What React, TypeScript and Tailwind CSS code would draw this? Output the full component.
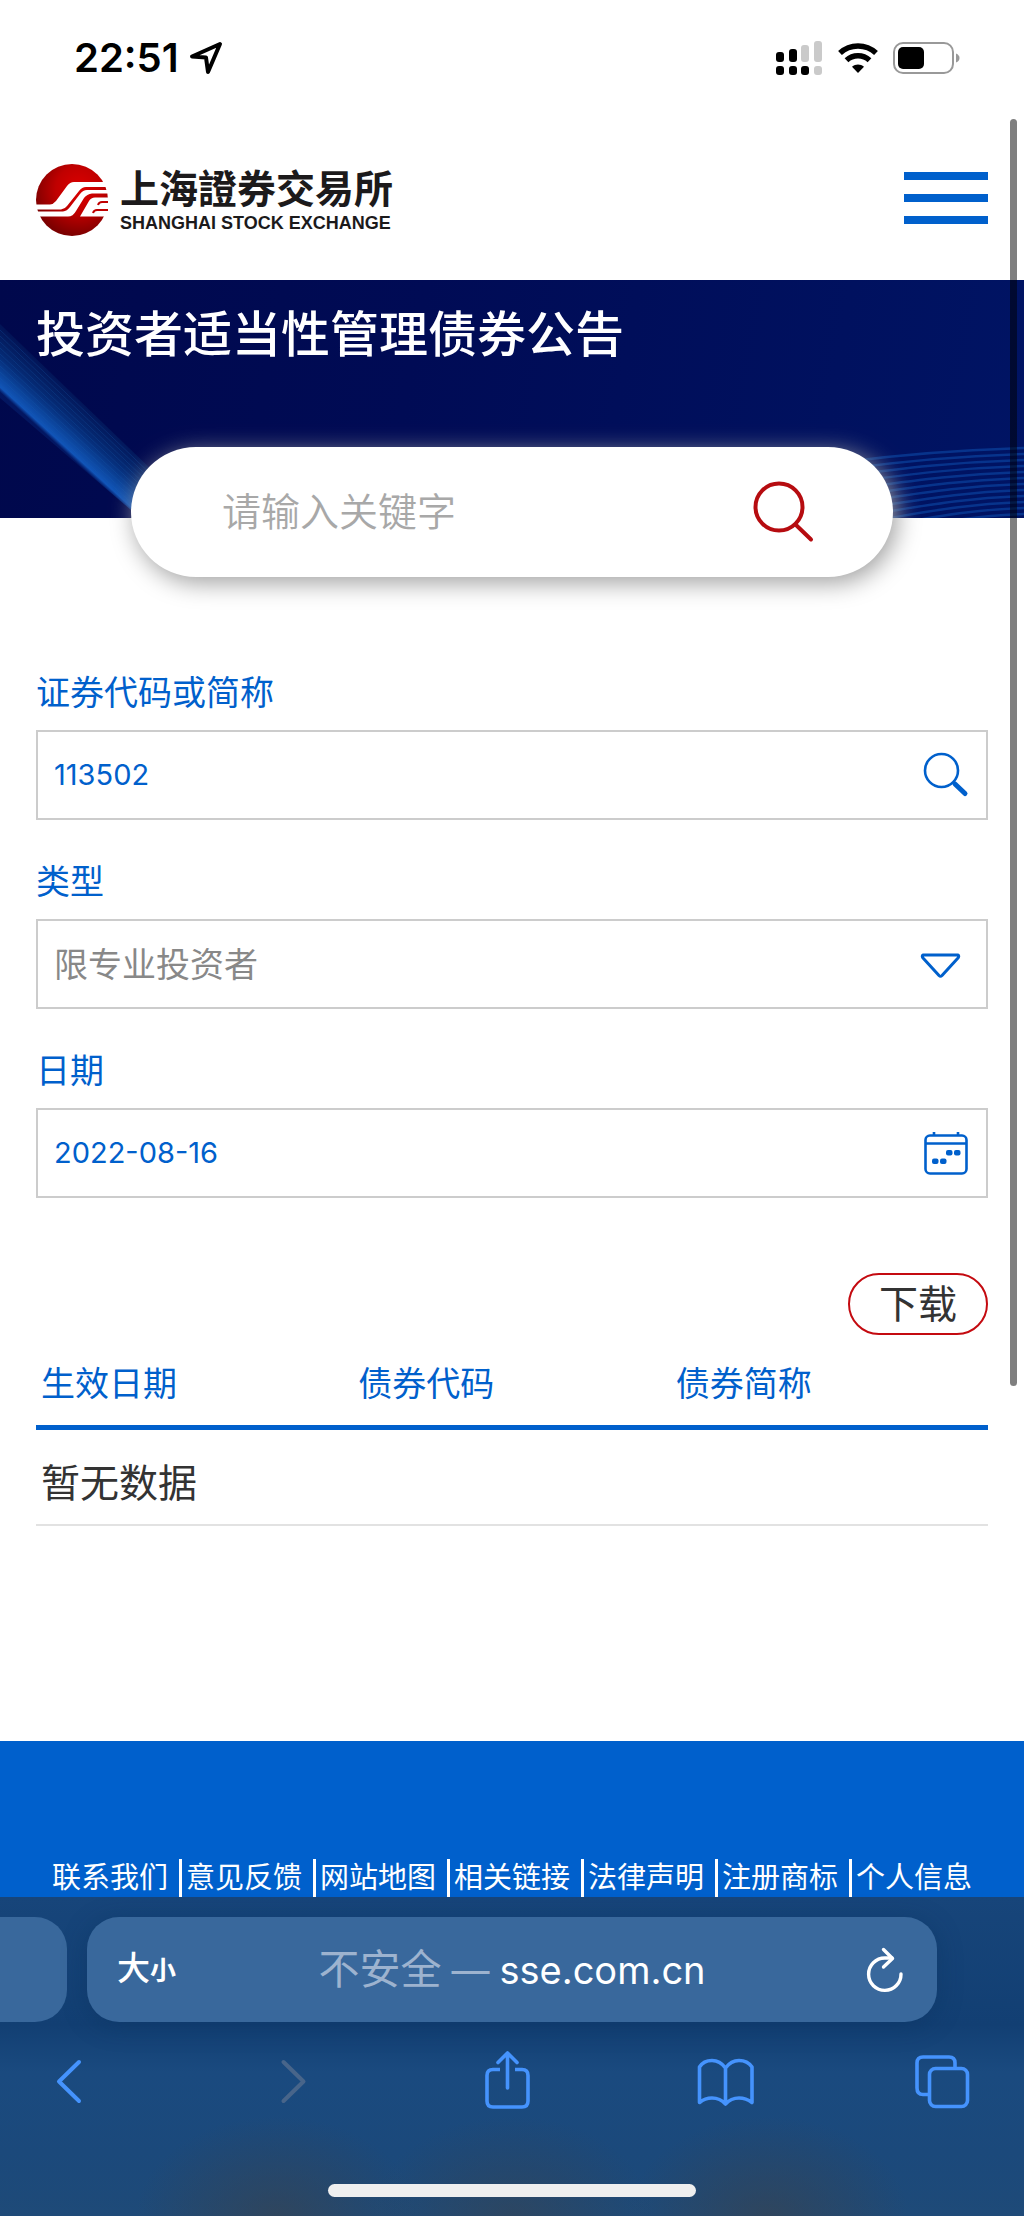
import { useState } from 'react';
import type { ReactNode } from 'react';

const footerLinks = ['联系我们', '意见反馈', '网站地图', '相关链接', '法律声明', '注册商标', '个人信息'];
const columns = ['生效日期', '债券代码', '债券简称'];

function StatusBar() {
  return (
    <div className="flex h-[116px] items-center justify-between pr-[63px] pl-[74px]">
      <div className="flex items-center gap-[10px]">
        <span className="text-[40px] leading-[48px] font-semibold text-black">22:51</span>
        <svg className="h-[34px] w-[34px]" viewBox="0 0 34 34" fill="none" stroke="#000" strokeWidth="4" strokeLinejoin="round">
          <path d="M31 3 L3 15.500 L17 16.500 L19 31 Z" />
        </svg>
      </div>
      <div className="flex items-center gap-[14px]">
        {/* 双卡信号 */}
        <svg className="h-[34px] w-[48px]" viewBox="0 0 48 34">
          <rect x="1" y="11" width="8" height="10" rx="3" />
          <rect x="14" y="8" width="8" height="13" rx="3" />
          <rect x="26" y="4" width="8" height="17" rx="3" fill="#cacaca" />
          <rect x="39" y="0" width="8" height="21" rx="3" fill="#cacaca" />
          <rect x="1" y="25" width="8" height="9" rx="3" />
          <rect x="14" y="25" width="8" height="9" rx="3" />
          <rect x="26" y="25" width="8" height="9" rx="3" />
          <rect x="39" y="25" width="8" height="9" rx="3" fill="#cacaca" />
        </svg>
        <svg className="h-[32px] w-[42px]" viewBox="0 0 42 32" fill="none" stroke="#000" strokeWidth="5.500">
          <path d="M3 11 C13 1.500 29 1.500 39 11" />
          <path d="M9.500 18.200 C16 12.200 26 12.200 32.500 18.200" />
          <path d="M21 31 L15 24.700 C18.500 21.700 23.500 21.700 27 24.700 Z" fill="#000" stroke="none" />
        </svg>
        <svg className="h-[32px] w-[68px]" viewBox="0 0 68 32">
          <rect x="1" y="1" width="59" height="30" rx="9" fill="none" stroke="#999" strokeWidth="2" />
          <rect x="5" y="5" width="26" height="22" rx="5" />
          <path d="M63 11.500 Q66.500 13 66.500 16 Q66.500 19 63 20.500 Z" fill="#999" />
        </svg>
      </div>
    </div>
  );
}

function Logo() {
  return (
    <a href="#" className="flex items-center gap-3">
      <svg className="h-[72px] w-[72px]" viewBox="0 0 72 72">
        <defs>
          <radialGradient id="logoRed" cx="0.600" cy="0.350" r="0.650">
            <stop offset="0" stopColor="#dc0000" />
            <stop offset="0.500" stopColor="#c00000" />
            <stop offset="1" stopColor="#7c0000" />
          </radialGradient>
        </defs>
        <circle cx="36" cy="36" r="36" fill="url(#logoRed)" />
        <g fill="#fff">
          <path d="M0 40.500 H14 Q17 40.500 20 37 L31 22 Q34 18 38 18 H72 V23 H50 Q46 23 43 27 L31 42 Q29 45 25 45.500 H0 Z" />
          <path d="M0 47.500 H27 Q31 47 34 43 L44 30 Q47 26 51 26 H72 V29.500 H56 Q51 30 48 34 L40 47 Q37 52.500 32 52.500 H0 Z" />
          <path d="M44 52.500 L53 37 Q55 33.500 59 33.500 H73 V52.500 Z" />
        </g>
        <path d="M72 38 H66 Q63 38 62 41 M72 46 H61 Q58 46 57 49" fill="none" stroke="#c00000" strokeWidth="2" />
      </svg>
      <span className="flex flex-col text-[#1c1a1b]">
        <span className="font-['Inter','Noto_Sans_CJK_TC',sans-serif] text-[39px] leading-[46px] font-bold">上海證券交易所</span>
        <span className="font-['Liberation_Sans',sans-serif] text-[18px] leading-[22px] font-bold">SHANGHAI STOCK EXCHANGE</span>
      </span>
    </a>
  );
}

function HeroArt() {
  const rays = [0, 1, 2, 3, 4, 5, 6, 7, 8, 9];
  const waves = [0, 1, 2, 3, 4, 5, 6, 7, 8, 9, 10, 11];
  return (
    <>
      <svg className="absolute top-0 left-0 h-full w-[180px]" viewBox="0 0 180 238" preserveAspectRatio="none">
        <defs>
          <linearGradient id="beam" gradientUnits="userSpaceOnUse" x1="0" y1="46" x2="-33" y2="82">
            <stop offset="0" stopColor="#07306f" stopOpacity="0.300" />
            <stop offset="0.450" stopColor="#06307c" stopOpacity="0.900" />
            <stop offset="0.700" stopColor="#0b439a" />
            <stop offset="0.920" stopColor="#1155b8" />
            <stop offset="1" stopColor="#0f4fb0" stopOpacity="0.200" />
          </linearGradient>
        </defs>
        <path d="M0 44 L180 217 V272 L0 118 Z" fill="url(#beam)" />
        {rays.map(i => (
          <path key={i} d={`M0 ${50 + i * 6} L180 ${222 + i * 5}`} stroke="#1d5fae" strokeOpacity="0.250" strokeWidth="1" />
        ))}
      </svg>
      <svg className="absolute right-0 bottom-0 h-[80px] w-[180px]" viewBox="0 0 180 80" fill="none">
        {waves.map(i => (
          <path
            key={i}
            d={`M0 ${24 + i * 7} C60 ${16 + i * 7} 110 ${12 + i * 6} 180 ${10 + i * 6}`}
            stroke="#0a3f9a"
            strokeOpacity="0.750"
            strokeWidth="2.500"
          />
        ))}
      </svg>
    </>
  );
}

function Field({ id, label, children }: { id: string; label: string; children: ReactNode }) {
  return (
    <div className="flex flex-col">
      <label htmlFor={id} className="mb-3 text-[34px] leading-[50px] text-[#0060cc]">
        {label}
      </label>
      <div className="relative flex h-[90px] border-2 border-[#ccc]">{children}</div>
    </div>
  );
}

function BrowserBar() {
  return (
    <div className="flex flex-col bg-[radial-gradient(ellipse_140px_100px_at_27%_100%,rgba(58,66,76,0.6),transparent),radial-gradient(ellipse_140px_100px_at_50%_100%,rgba(58,66,76,0.5),transparent),radial-gradient(ellipse_140px_100px_at_75%_100%,rgba(58,66,76,0.6),transparent),linear-gradient(#17457a,#123f73_40%,#1a4a7f_55%,#1b497b_80%,#1e4a78)]">
      <div className="flex gap-5 pt-5">
        <div className="h-[105px] w-[67px] rounded-r-[32px] bg-[#39689c]" />
        <div className="mr-[87px] flex h-[105px] flex-1 items-center rounded-[32px] bg-[#39689c] px-[30px] text-white shadow-[0_4px_24px_rgba(10,45,90,0.35)]">
          <button type="button" className="flex w-[60px] items-baseline">
            <span className="text-[33px] leading-[48px] font-medium">大</span>
            <span className="text-[26px] leading-[48px] font-bold">小</span>
          </button>
          <div className="flex flex-1 items-baseline justify-center gap-[10px] text-[38px] leading-[52px]">
            <span className="text-[41px] text-[#9db3cf]">不安全</span>
            <span className="text-[#9db3cf]">—</span>
            <span>sse.com.cn</span>
          </div>
          <button type="button" aria-label="刷新" className="flex w-[60px] justify-end">
            <svg className="h-[46px] w-[46px]" viewBox="0 0 46 46" fill="none" stroke="#fff" strokeWidth="3.400" strokeLinecap="round" strokeLinejoin="round">
              <path d="M40 27 A16.200 16.200 0 1 1 23.800 11 H31" />
              <path d="M22.500 2.500 L31.500 11.500 L22.500 20" />
            </svg>
          </button>
        </div>
      </div>
      <div className="mt-7 flex justify-between pr-[52px] pl-[42px] text-[#4593fd]">
        <button type="button" aria-label="后退">
          <svg className="h-[60px] w-[60px]" viewBox="0 0 60 60" fill="none" stroke="currentColor" strokeWidth="4" strokeLinecap="round" strokeLinejoin="round">
            <path d="M37 12 L17 31.500 L37 51" />
          </svg>
        </button>
        <button type="button" aria-label="前进" disabled className="text-[#48658a]">
          <svg className="h-[60px] w-[60px]" viewBox="0 0 60 60" fill="none" stroke="currentColor" strokeWidth="4" strokeLinecap="round" strokeLinejoin="round">
            <path d="M23.500 12 L43.500 31.500 L23.500 51" />
          </svg>
        </button>
        <button type="button" aria-label="分享">
          <svg className="h-[60px] w-[60px]" viewBox="0 0 60 60" fill="none" stroke="currentColor" strokeWidth="3.600" strokeLinecap="round" strokeLinejoin="round">
            <path d="M23 19.500 H16 Q10 19.500 10 25.500 V51 Q10 57 16 57 H45 Q51 57 51 51 V25.500 Q51 19.500 45 19.500 H38" strokeLinecap="butt" />
            <path d="M30.500 38 V3.500 M21 12.500 L30.500 3 L40 12.500" />
          </svg>
        </button>
        <button type="button" aria-label="书签">
          <svg className="h-[60px] w-[60px]" viewBox="0 0 60 60" fill="none" stroke="currentColor" strokeWidth="3.600" strokeLinecap="round" strokeLinejoin="round">
            <path d="M30.500 18 Q25 10.500 17 10.500 Q8.500 10.500 4.500 17 V52.500 Q10 48 17 48 Q25 48 30.500 54 Q36 48 44 48 Q51 48 57 52.500 V17 Q52.500 10.500 44 10.500 Q36 10.500 30.500 18 Z M30.500 18 V54" />
          </svg>
        </button>
        <button type="button" aria-label="标签页">
          <svg className="h-[60px] w-[60px]" viewBox="0 0 60 60" fill="none" stroke="currentColor" strokeWidth="3.600">
            <rect x="17.500" y="18.500" width="38" height="38" rx="6" />
            <path d="M43 18 V13 Q43 7 37 7 H11 Q5 7 5 13 V38 Q5 44.500 11 44.500 H17" />
          </svg>
        </button>
      </div>
      <div className="mx-auto mt-[74px] mb-[19px] h-[13px] w-[368px] rounded-full bg-[#efefef]" />
    </div>
  );
}

export default function App() {
  const [keyword, setKeyword] = useState('');
  const [code, setCode] = useState('113502');
  const [type, setType] = useState('限专业投资者');
  const [date, setDate] = useState('2022-08-16');

  return (
    <div className="relative flex min-h-screen flex-col overflow-hidden bg-white font-['Inter','Noto_Sans_CJK_SC',sans-serif]">
      <StatusBar />

      <header className="flex h-[164px] items-start justify-between px-9 pt-12">
        <Logo />
        <button type="button" aria-label="菜单" className="flex w-[84px] flex-col gap-[14px] pt-2">
          <span className="h-2 bg-[#0060cc]" />
          <span className="h-2 bg-[#0060cc]" />
          <span className="h-2 bg-[#0060cc]" />
        </button>
      </header>

      <section className="relative h-[238px] overflow-hidden bg-[linear-gradient(100deg,#00084c,#000b55_40%,#001464)] px-9 pt-5">
        <HeroArt />
        <h1 className="relative text-[49px] leading-[70px] font-medium text-white">投资者适当性管理债券公告</h1>
      </section>

      {/* 全站搜索 */}
      <form
        className="relative mx-[131px] -mt-[71px] flex h-[130px] items-center rounded-full bg-white pr-[78px] pl-[91px] shadow-[4px_6px_24px_#a0a0a0]"
        onSubmit={e => e.preventDefault()}
      >
        <input
          aria-label="请输入关键字"
          placeholder="请输入关键字"
          value={keyword}
          onChange={e => setKeyword(e.target.value)}
          className="h-[60px] min-w-0 flex-1 text-[39px] leading-[60px] font-[350] outline-none placeholder:text-[#a8a8a8]"
        />
        <button type="submit" aria-label="搜索">
          <svg className="h-[62px] w-[62px]" viewBox="0 0 62 62" fill="none" stroke="#b60c10" strokeWidth="4" strokeLinecap="round">
            <circle cx="26" cy="26" r="23.500" />
            <path d="M42.500 43.500 L58 58.500" />
          </svg>
        </button>
      </form>

      <main className="flex flex-col px-9 pt-[91px]">
        <div className="flex flex-col gap-[37px]">
          <Field id="code" label="证券代码或简称">
            <input
              id="code"
              value={code}
              onChange={e => setCode(e.target.value)}
              className="min-w-0 flex-1 px-4 text-[29px] text-[#0060cc] outline-none"
            />
            <button type="button" aria-label="查询" className="mr-[17px]">
              <svg className="h-[46px] w-[46px]" viewBox="0 0 46 46" fill="none" stroke="#0060cc" strokeLinecap="round">
                <circle cx="18.500" cy="18.500" r="16.500" strokeWidth="2.600" />
                <path d="M32 32 L42 41.500" strokeWidth="5" />
              </svg>
            </button>
          </Field>
          <Field id="type" label="类型">
            <select
              id="type"
              value={type}
              onChange={e => setType(e.target.value)}
              className="min-w-0 flex-1 appearance-none px-4 text-[34px] text-[#888] outline-none"
            >
              <option>限专业投资者</option>
              <option>全部</option>
            </select>
            <svg className="pointer-events-none absolute top-[29px] right-[23px] h-[32px] w-[44px]" viewBox="0 0 44 32" fill="none" stroke="#0060cc" strokeWidth="3" strokeLinejoin="round">
              <path d="M4 5 H39 Q40.500 6 39 8 L23 25.500 Q21.500 27 20 25.500 L4 8 Q2.500 6 4 5 Z" />
            </svg>
          </Field>
          <Field id="date" label="日期">
            <input
              id="date"
              value={date}
              onChange={e => setDate(e.target.value)}
              className="min-w-0 flex-1 px-4 text-[29px] text-[#0060cc] outline-none"
            />
            <button type="button" aria-label="选择日期" className="mr-[17px]">
              <svg className="h-[46px] w-[46px]" viewBox="0 0 46 46" fill="none" stroke="#0060cc" strokeWidth="2.600">
                <rect x="2.500" y="5.500" width="41" height="38" rx="4.500" />
                <path d="M2.500 13.500 H43.500 M11 2 V5.500 M35 2 V5.500" />
                <g fill="#0060cc" stroke="none">
                  <rect x="9" y="28.500" width="6.500" height="5.500" rx="2" />
                  <rect x="17" y="28.500" width="6.500" height="5.500" rx="2" />
                  <rect x="23" y="20" width="6.500" height="5.500" rx="2" />
                  <rect x="31" y="20" width="6.500" height="5.500" rx="2" />
                </g>
              </svg>
            </button>
          </Field>
        </div>

        <button
          type="button"
          className="mt-[75px] h-[62px] self-end rounded-full border-2 border-[#c40a10] px-[29px] text-[39px] leading-[56px] text-[#333]"
        >
          下载
        </button>

        <table className="mt-4 w-full table-fixed border-collapse text-left">
          <thead>
            <tr className="h-[76px] border-b-[5px] border-[#0060cc]">
              {columns.map(col => (
                <th key={col} className="px-[5px] pb-2 text-[34px] leading-[50px] font-normal text-[#0060cc]">
                  {col}
                </th>
              ))}
            </tr>
          </thead>
          <tbody>
            <tr className="h-[98px] border-b-2 border-[#e2e2e2]">
              <td colSpan={3} className="px-[5px] pt-3 text-[39px] leading-[56px] text-[#333]">
                暂无数据
              </td>
            </tr>
          </tbody>
        </table>
      </main>

      <footer className="mt-auto flex h-[156px] items-end justify-center bg-[#0060cc] text-white">
        {footerLinks.map((link, i) => (
          <a
            key={link}
            href="#"
            className={`text-[29px] leading-[38px] whitespace-nowrap ${i > 0 ? 'pl-1' : ''} ${i < footerLinks.length - 1 ? 'border-r-[3px] border-white pr-[11px]' : ''}`}
          >
            {link}
          </a>
        ))}
      </footer>

      <BrowserBar />

      {/* 滚动条 */}
      <div className="absolute top-[119px] right-[7px] h-[1267px] w-[7px] rounded-full bg-black/50" />
    </div>
  );
}
